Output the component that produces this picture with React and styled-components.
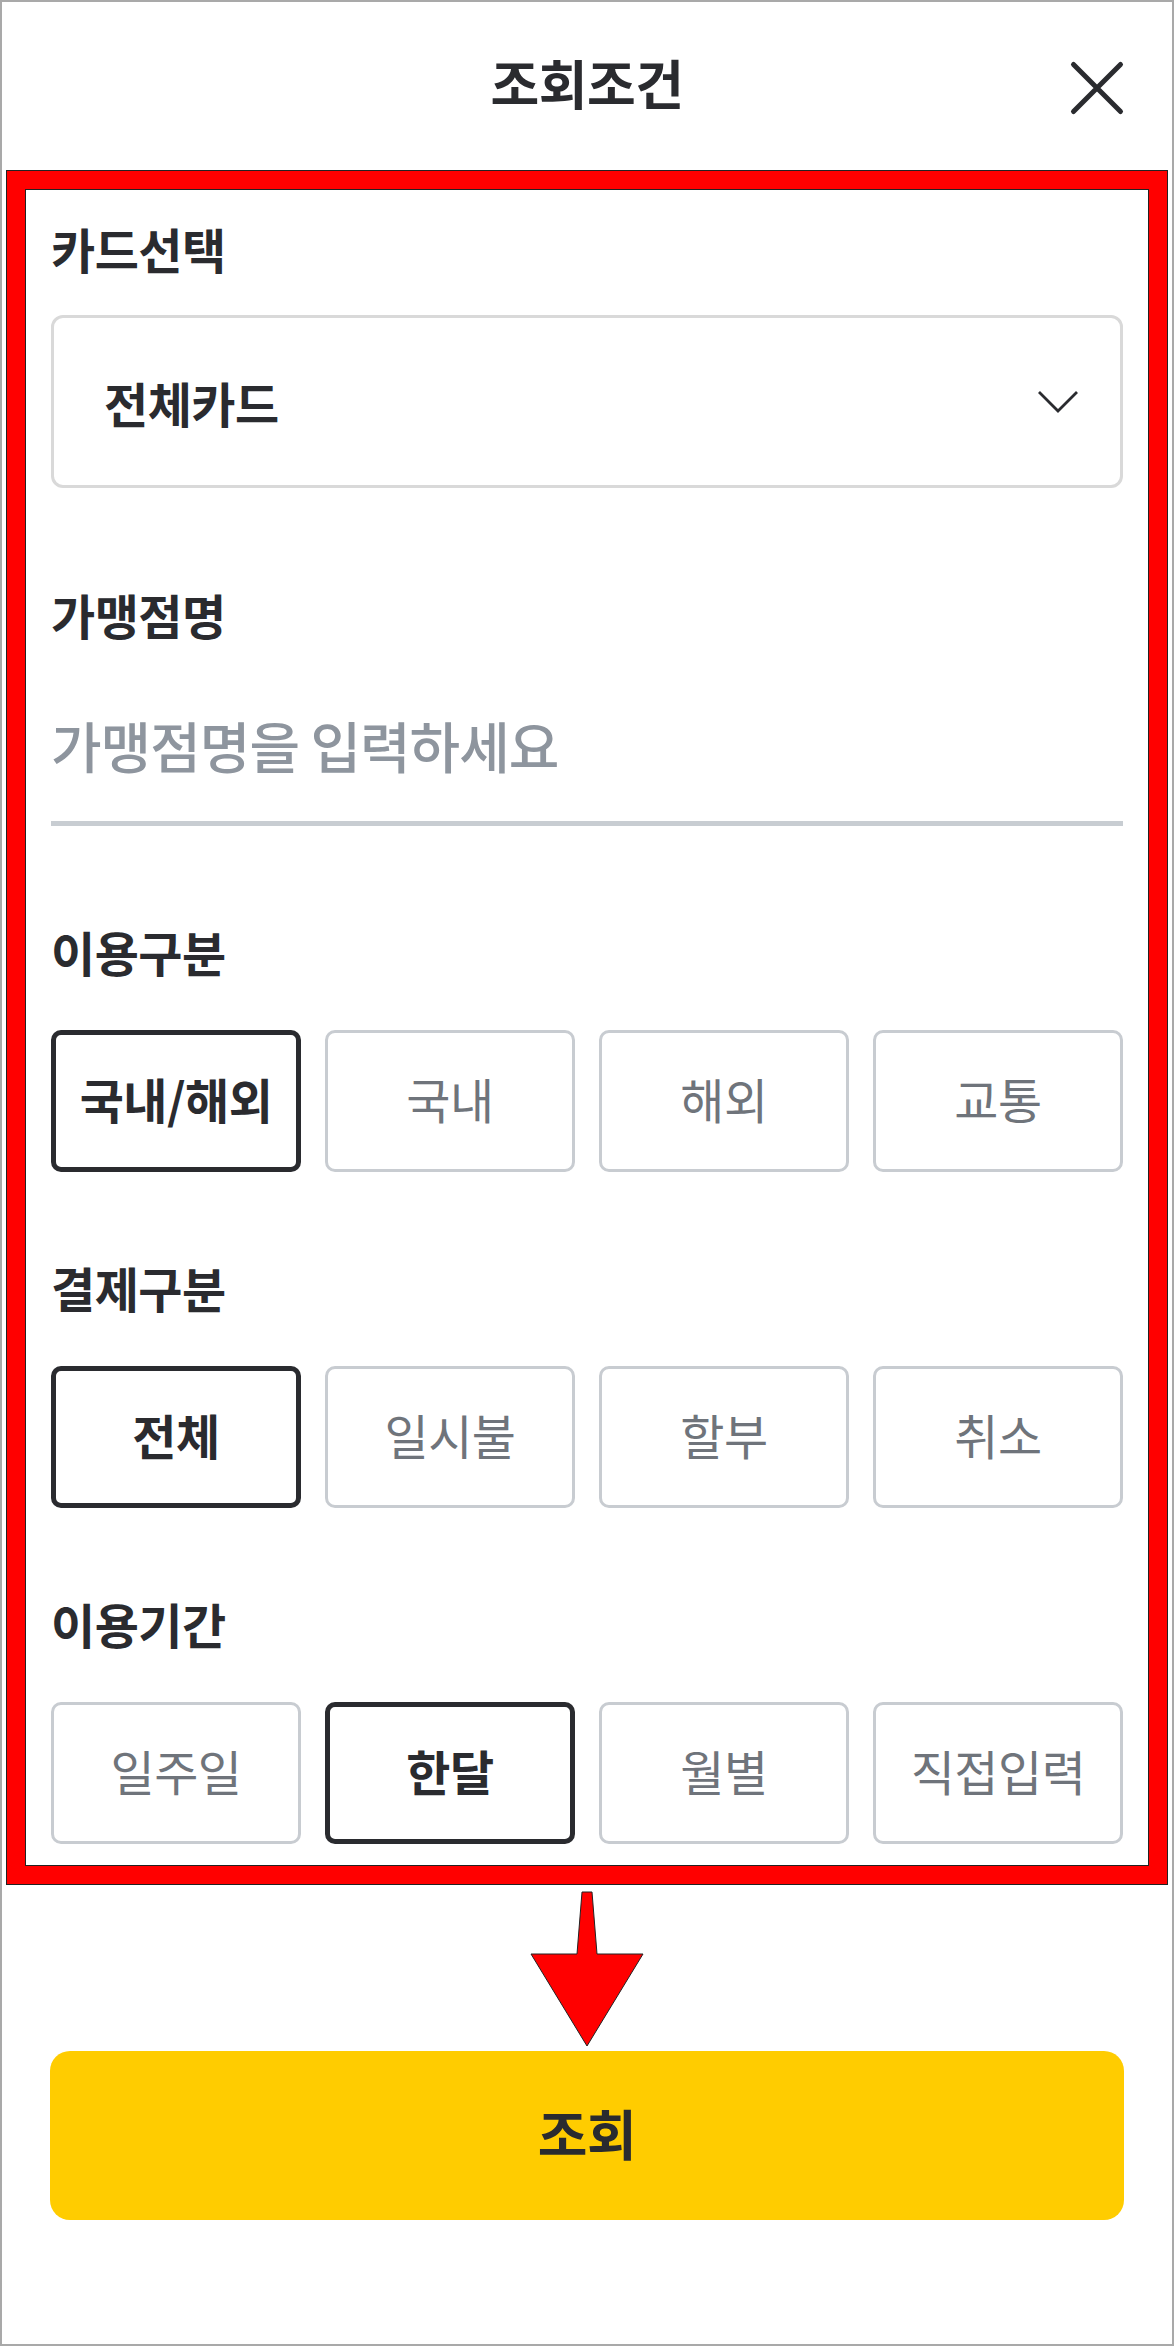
import React, { useState } from 'react'
import styled, { createGlobalStyle } from 'styled-components'

const GlobalStyle = createGlobalStyle`
    html, body {
        margin: 0;
        padding: 0;
        background: #fff;
    }
    * {
        box-sizing: border-box;
    }
`

const Page = styled.div`
    width: 1174px;
    height: 2346px;
    border: 2px solid #a9a9a9;
    background-color: #fff;
    font-family: 'Noto Sans CJK KR', 'Noto Sans', sans-serif;
    color: #2a2b2f;
    display: flex;
    flex-direction: column;
`

const Header = styled.header`
    position: relative;
    height: 168px;
    padding-bottom: 8px;
    display: flex;
    align-items: center;
    justify-content: center;
`

const Title = styled.h1`
    margin: 0;
    font-size: 53px;
    font-weight: 700;
    line-height: 64px;
    letter-spacing: -0.5px;
`

const CloseButton = styled.button`
    position: absolute;
    right: 47px;
    top: 58px;
    width: 56px;
    height: 56px;
    padding: 0;
    border: none;
    background: none;
    cursor: pointer;
    display: flex;
`

const Highlight = styled.div`
    margin: 0 4px;
    border: 1px solid #222;
    background-color: #ff0000;
    padding: 18px;
`

const Content = styled.div`
    border: 1px solid #222;
    background-color: #fff;
    padding: 33px 25px 21px;
    display: flex;
    flex-direction: column;
`

const Label = styled.h2`
    margin: 0;
    margin-top: ${({ $top }) => $top || 0}px;
    padding-bottom: 10px;
    font-size: 48px;
    font-weight: 700;
    line-height: 50px;
    letter-spacing: -0.5px;
`

const Select = styled.div`
    margin-top: 32px;
    height: 173px;
    border: 3px solid #d9d9d9;
    border-radius: 12px;
    padding: 0 40px 0 50px;
    display: flex;
    align-items: center;
    justify-content: space-between;
    cursor: pointer;
`

const SelectText = styled.span`
    font-size: 48px;
    font-weight: 700;
    letter-spacing: -0.5px;
`

const InputWrapper = styled.div`
    margin-top: 60px;
    padding-bottom: 43px;
    border-bottom: 5px solid #c8cdd2;
`

const TextInput = styled.input`
    display: block;
    width: 100%;
    height: 69px;
    padding: 0;
    border: none;
    outline: none;
    font-family: inherit;
    font-size: 55px;
    font-weight: 500;
    letter-spacing: -1px;
    color: #2a2b2f;

    &::placeholder {
        color: #8e959e;
    }
`

const OptionRow = styled.div`
    margin-top: 44px;
    display: grid;
    grid-template-columns: repeat(4, 1fr);
    gap: 24px;
`

const Option = styled.button`
    height: 142px;
    padding: 0 0 6px;
    background: #fff;
    border: ${({ $active }) => ($active ? '5px solid #2a2b2f' : '3px solid #c8ccd1')};
    border-radius: 10px;
    font-family: inherit;
    font-size: 48px;
    letter-spacing: -0.5px;
    font-weight: ${({ $active }) => ($active ? 700 : 400)};
    color: ${({ $active }) => ($active ? '#2a2b2f' : '#6f747b')};
    cursor: pointer;
`

const ArrowArea = styled.div`
    height: 166px;
    display: flex;
    justify-content: center;
`

const SubmitButton = styled.button`
    margin: 0 48px;
    height: 169px;
    padding: 0 0 6px;
    border: none;
    border-radius: 20px;
    background-color: #ffcc00;
    font-family: inherit;
    font-size: 54px;
    font-weight: 700;
    letter-spacing: -0.5px;
    color: #2a2b2f;
    cursor: pointer;
`

const sections = [
    { key: 'usage', title: '이용구분', top: 100, options: ['국내/해외', '국내', '해외', '교통'] },
    { key: 'payment', title: '결제구분', top: 90, options: ['전체', '일시불', '할부', '취소'] },
    { key: 'period', title: '이용기간', top: 90, options: ['일주일', '한달', '월별', '직접입력'] },
]

export default function App() {
    const [store, setStore] = useState('')
    const [selected, setSelected] = useState({ usage: '국내/해외', payment: '전체', period: '한달' })

    return (
        <>
            <GlobalStyle />
            <Page>
                <Header>
                    <Title>조회조건</Title>
                    <CloseButton aria-label="닫기">
                        <svg width="56" height="56" viewBox="0 0 56 56">
                            <path d="M4.5 4.5 L51.5 51.5 M51.5 4.5 L4.5 51.5" stroke="#2a2b2f" strokeWidth="5" strokeLinecap="round" fill="none" />
                        </svg>
                    </CloseButton>
                </Header>
                <Highlight>
                    <Content>
                        <Label>카드선택</Label>
                        <Select>
                            <SelectText>전체카드</SelectText>
                            <svg width="44" height="26" viewBox="0 0 44 26">
                                <path d="M3 3 L22 22 L41 3" stroke="#2a2b2f" strokeWidth="2.8" fill="none" />
                            </svg>
                        </Select>

                        <Label $top={101}>가맹점명</Label>
                        <InputWrapper>
                            <TextInput placeholder="가맹점명을 입력하세요" value={store} onChange={e => setStore(e.target.value)} />
                        </InputWrapper>

                        {sections.map(section => (
                            <React.Fragment key={section.key}>
                                <Label $top={section.top}>{section.title}</Label>
                                <OptionRow>
                                    {section.options.map(option => (
                                        <Option
                                            key={option}
                                            $active={selected[section.key] === option}
                                            onClick={() => setSelected({ ...selected, [section.key]: option })}
                                        >
                                            {option}
                                        </Option>
                                    ))}
                                </OptionRow>
                            </React.Fragment>
                        ))}
                    </Content>
                </Highlight>
                <ArrowArea>
                    <svg width="120" height="166" viewBox="0 0 120 166">
                        <polygon points="55,7 65,7 70,69 116,69 60,161 4,69 50,69" fill="#ff0000" stroke="#222" strokeWidth="1" />
                    </svg>
                </ArrowArea>
                <SubmitButton>조회</SubmitButton>
            </Page>
        </>
    )
}
